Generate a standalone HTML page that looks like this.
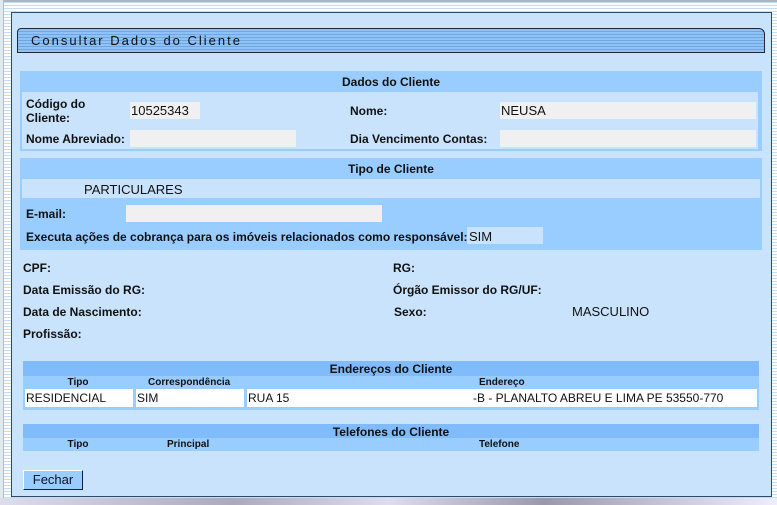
<!DOCTYPE html><html><head><style>
body{margin:0;width:777px;height:505px;overflow:hidden;position:relative;font-family:"Liberation Sans",sans-serif;background:repeating-linear-gradient(#fff 0 2px,#c6dcf2 2px 3px);}
.a{position:absolute;}
.b{font-weight:bold;font-size:12px;color:#111;}
.v{font-size:13px;color:#111;}
.box{position:absolute;background:#f0f0f0;}
.h{position:absolute;text-align:center;font-weight:bold;font-size:12px;color:#111;}
</style></head><body>
<div class="a" style="left:0;top:0;width:777px;height:2px;background:#a9b4c0"></div>
<div class="a" style="left:0;top:0;width:3px;height:505px;background:#e0e8f0;border-right:1px solid #b0bcc8"></div>
<div class="a" style="left:11px;top:12px;width:759px;height:483px;background:#c9e3fd;border:1px solid #2d4a66"></div>
<div class="a" style="left:0;top:498px;width:777px;height:7px;background:linear-gradient(90deg,#dde 0,#aab 30%,#dde 50%,#99a 70%,#eef)"></div>
<div class="a" style="left:17px;top:28px;width:746px;height:23px;border:1px solid #1a2a3a;border-radius:4px 6px 0 0;background:repeating-linear-gradient(#8fc3f7 0 2px,#6fa6e0 2px 3px)"></div>
<div class="a" style="left:31px;top:33px;font-size:13px;letter-spacing:2px;color:#111">Consultar Dados do Cliente</div>

<div class="a" style="left:20px;top:71px;width:742px;height:80px;background:#99ccff"></div>
<div class="a" style="left:22px;top:92px;width:736px;height:57px;background:#c9e3fd"></div>
<div class="h" style="left:20px;top:75px;width:742px">Dados do Cliente</div>
<div class="a b" style="left:26px;top:97px;line-height:14px">Código do<br>Cliente:</div>
<div class="box" style="left:130px;top:102px;width:70px;height:17px"></div>
<div class="a v" style="left:131px;top:103px">10525343</div>
<div class="a b" style="left:350px;top:104px">Nome:</div>
<div class="box" style="left:500px;top:102px;width:256px;height:17px"></div>
<div class="a v" style="left:501px;top:103px">NEUSA</div>
<div class="a b" style="left:26px;top:132px">Nome Abreviado:</div>
<div class="box" style="left:130px;top:130px;width:166px;height:17px"></div>
<div class="a b" style="left:350px;top:132px">Dia Vencimento Contas:</div>
<div class="box" style="left:500px;top:130px;width:256px;height:17px"></div>

<div class="a" style="left:20px;top:158px;width:742px;height:92px;background:#99ccff"></div>
<div class="h" style="left:20px;top:162px;width:742px">Tipo de Cliente</div>
<div class="a" style="left:22px;top:179px;width:738px;height:19px;background:#c9e3fd"></div>
<div class="a v" style="left:84px;top:182px">PARTICULARES</div>
<div class="a b" style="left:26px;top:207px">E-mail:</div>
<div class="box" style="left:126px;top:205px;width:256px;height:17px"></div>
<div class="a b" style="left:26px;top:230px">Executa ações de cobrança para os imóveis relacionados como responsável:</div>
<div class="box" style="left:467px;top:227px;width:76px;height:17px;background:#c9e3fd"></div>
<div class="a v" style="left:469px;top:229px">SIM</div>

<div class="a b" style="left:23px;top:261px">CPF:</div>
<div class="a b" style="left:393px;top:261px">RG:</div>
<div class="a b" style="left:23px;top:283px">Data Emissão do RG:</div>
<div class="a b" style="left:393px;top:283px">Órgão Emissor do RG/UF:</div>
<div class="a b" style="left:23px;top:305px">Data de Nascimento:</div>
<div class="a b" style="left:394px;top:305px">Sexo:</div>
<div class="a v" style="left:572px;top:304px">MASCULINO</div>
<div class="a b" style="left:23px;top:327px">Profissão:</div>

<div class="a" style="left:23px;top:361px;width:736px;height:15px;background:#80bbfc"></div>
<div class="a" style="left:23px;top:376px;width:736px;height:34px;background:#99ccff"></div>
<div class="h" style="left:23px;top:362px;width:736px">Endereços do Cliente</div>
<div class="h" style="left:50px;top:377px;width:56px;font-size:10px">Tipo</div>
<div class="a b" style="left:148px;top:377px;font-size:10px">Correspondência</div>
<div class="a b" style="left:479px;top:377px;font-size:10px">Endereço</div>
<div class="a" style="left:25px;top:389px;width:108px;height:18px;background:#fff"></div>
<div class="a" style="left:136px;top:389px;width:108px;height:18px;background:#fff"></div>
<div class="a" style="left:247px;top:389px;width:510px;height:18px;background:#fff"></div>
<div class="a v" style="left:26px;top:391px;font-size:12px">RESIDENCIAL</div>
<div class="a v" style="left:137px;top:391px;font-size:12px">SIM</div>
<div class="a v" style="left:248px;top:391px;font-size:12px">RUA 15</div>
<div class="a v" style="left:473px;top:391px;font-size:12px">-B - PLANALTO ABREU E LIMA PE 53550-770</div>

<div class="a" style="left:23px;top:424px;width:736px;height:14px;background:#80bbfc"></div>
<div class="a" style="left:23px;top:438px;width:736px;height:13px;background:#99ccff"></div>
<div class="h" style="left:23px;top:425px;width:736px">Telefones do Cliente</div>
<div class="h" style="left:50px;top:439px;width:56px;font-size:10px">Tipo</div>
<div class="a b" style="left:167px;top:439px;font-size:10px">Principal</div>
<div class="a b" style="left:479px;top:439px;font-size:10px">Telefone</div>

<div class="a" style="left:23px;top:470px;width:58px;height:18px;background:#99ccff;border-top:1px solid #fff;border-left:1px solid #fff;border-right:1px solid #102040;border-bottom:1px solid #102040;font-size:13px;color:#112;text-align:center;line-height:18px">Fechar</div>
</body></html>
